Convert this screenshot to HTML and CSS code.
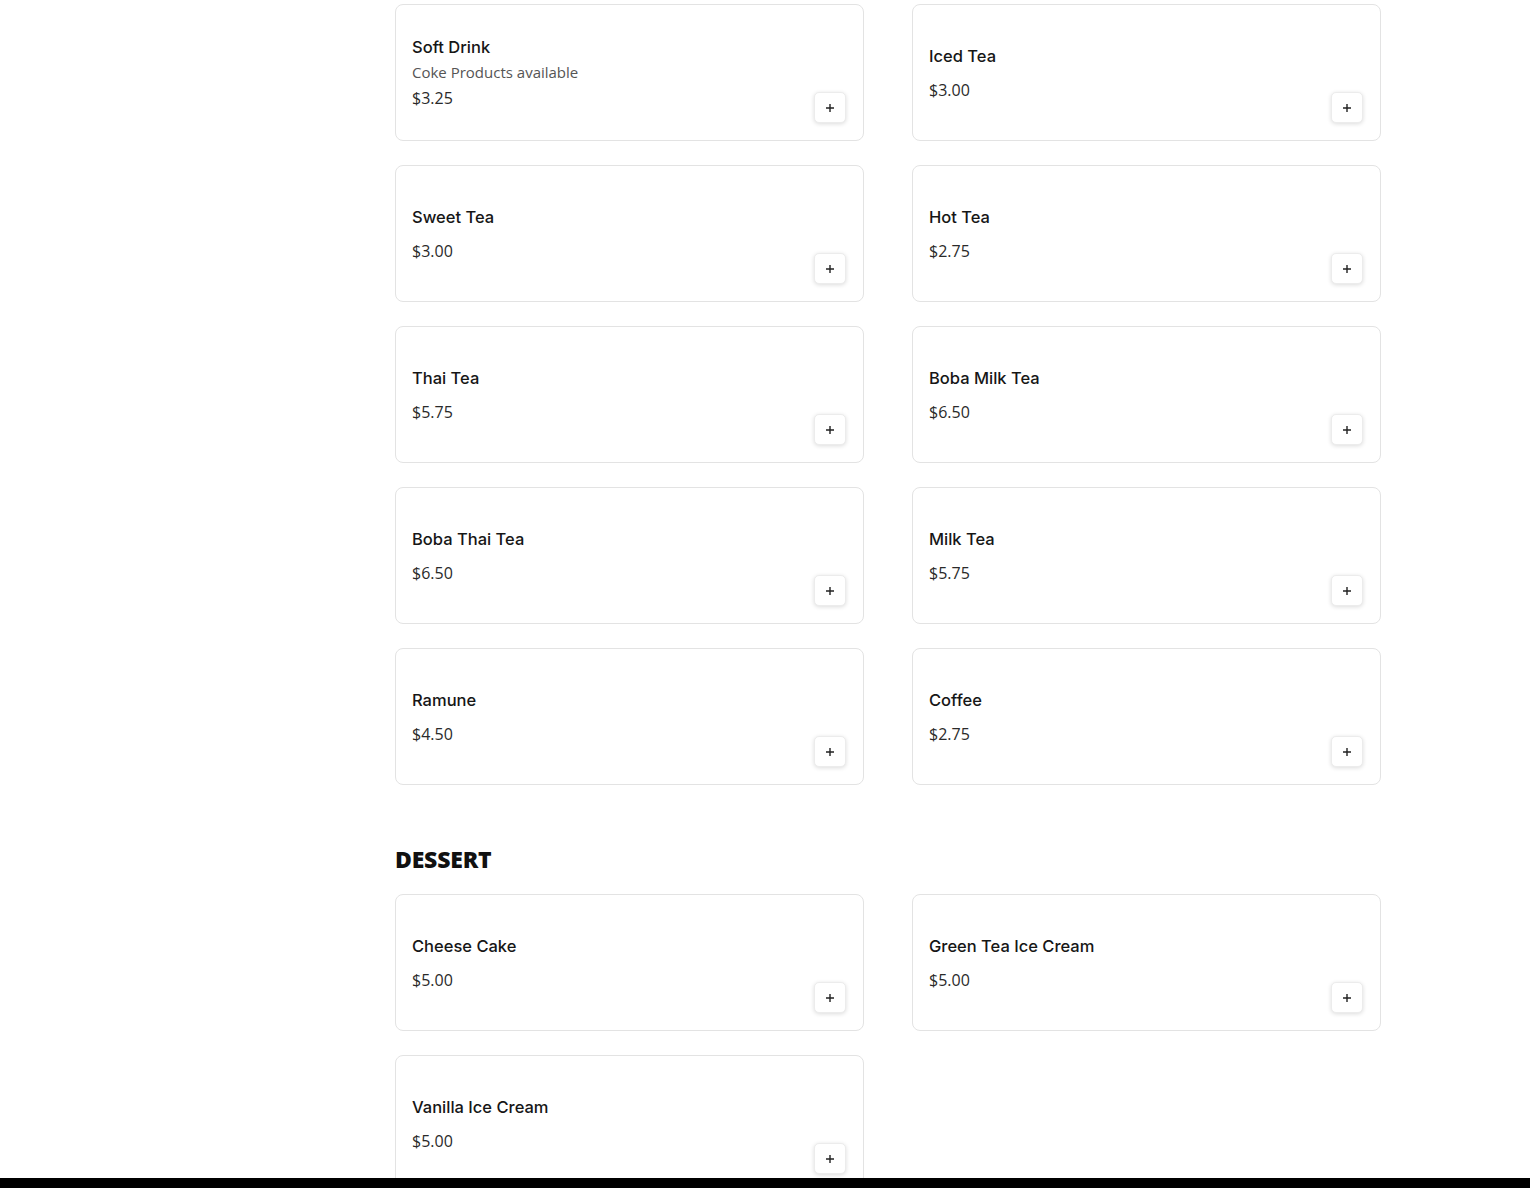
FILE: index.html
```html
<!DOCTYPE html>
<html>
<head>
<meta charset="utf-8">
<link rel="stylesheet" href="styles.css">
</head>
<body>
<div class="page">
  <aside class="side"></aside>
  <main class="menu">
    <section class="section">
      <div class="grid">
        <div class="card"><div class="info"><div class="title">Soft Drink</div><div class="desc">Coke Products available</div><div class="price">$3.25</div></div><button class="add"><svg viewBox="0 0 10 10" width="10" height="10"><path d="M5 1v8M1 5h8" stroke="#222" stroke-width="1.4"/></svg></button></div>
        <div class="card"><div class="info"><div class="title">Iced Tea</div><div class="price">$3.00</div></div><button class="add"><svg viewBox="0 0 10 10" width="10" height="10"><path d="M5 1v8M1 5h8" stroke="#222" stroke-width="1.4"/></svg></button></div>
        <div class="card"><div class="info"><div class="title">Sweet Tea</div><div class="price">$3.00</div></div><button class="add"><svg viewBox="0 0 10 10" width="10" height="10"><path d="M5 1v8M1 5h8" stroke="#222" stroke-width="1.4"/></svg></button></div>
        <div class="card"><div class="info"><div class="title">Hot Tea</div><div class="price">$2.75</div></div><button class="add"><svg viewBox="0 0 10 10" width="10" height="10"><path d="M5 1v8M1 5h8" stroke="#222" stroke-width="1.4"/></svg></button></div>
        <div class="card"><div class="info"><div class="title">Thai Tea</div><div class="price">$5.75</div></div><button class="add"><svg viewBox="0 0 10 10" width="10" height="10"><path d="M5 1v8M1 5h8" stroke="#222" stroke-width="1.4"/></svg></button></div>
        <div class="card"><div class="info"><div class="title">Boba Milk Tea</div><div class="price">$6.50</div></div><button class="add"><svg viewBox="0 0 10 10" width="10" height="10"><path d="M5 1v8M1 5h8" stroke="#222" stroke-width="1.4"/></svg></button></div>
        <div class="card"><div class="info"><div class="title">Boba Thai Tea</div><div class="price">$6.50</div></div><button class="add"><svg viewBox="0 0 10 10" width="10" height="10"><path d="M5 1v8M1 5h8" stroke="#222" stroke-width="1.4"/></svg></button></div>
        <div class="card"><div class="info"><div class="title">Milk Tea</div><div class="price">$5.75</div></div><button class="add"><svg viewBox="0 0 10 10" width="10" height="10"><path d="M5 1v8M1 5h8" stroke="#222" stroke-width="1.4"/></svg></button></div>
        <div class="card"><div class="info"><div class="title">Ramune</div><div class="price">$4.50</div></div><button class="add"><svg viewBox="0 0 10 10" width="10" height="10"><path d="M5 1v8M1 5h8" stroke="#222" stroke-width="1.4"/></svg></button></div>
        <div class="card"><div class="info"><div class="title">Coffee</div><div class="price">$2.75</div></div><button class="add"><svg viewBox="0 0 10 10" width="10" height="10"><path d="M5 1v8M1 5h8" stroke="#222" stroke-width="1.4"/></svg></button></div>
      </div>
    </section>
    <section class="section">
      <h2 class="heading">DESSERT</h2>
      <div class="grid">
        <div class="card"><div class="info"><div class="title">Cheese Cake</div><div class="price">$5.00</div></div><button class="add"><svg viewBox="0 0 10 10" width="10" height="10"><path d="M5 1v8M1 5h8" stroke="#222" stroke-width="1.4"/></svg></button></div>
        <div class="card"><div class="info"><div class="title">Green Tea Ice Cream</div><div class="price">$5.00</div></div><button class="add"><svg viewBox="0 0 10 10" width="10" height="10"><path d="M5 1v8M1 5h8" stroke="#222" stroke-width="1.4"/></svg></button></div>
        <div class="card"><div class="info"><div class="title">Vanilla Ice Cream</div><div class="price">$5.00</div></div><button class="add"><svg viewBox="0 0 10 10" width="10" height="10"><path d="M5 1v8M1 5h8" stroke="#222" stroke-width="1.4"/></svg></button></div>
      </div>
    </section>
  </main>
</div>
<div class="bottom-bar"></div>
</body>
</html>
```

FILE: styles.css
```css
* { box-sizing: border-box; }
html, body { margin: 0; padding: 0; background: #fff; }
body {
  font-family: "Open Sans", "Noto Sans", sans-serif;
  color: #1a1a1a;
  overflow: hidden;
  height: 1188px;
}
.page { display: flex; }
.side { width: 395px; flex: none; }
.menu { width: 986px; flex: none; padding-top: 4px; }
.grid {
  display: grid;
  grid-template-columns: 1fr 1fr;
  column-gap: 48px;
  row-gap: 24px;
}
.card {
  height: 137px;
  border: 1px solid #e3e3e3;
  border-radius: 8px;
  padding: 0 17px 17px 16px;
  display: flex;
  align-items: center;
  background: #fff;
}
.info { flex: 1; padding-top: 17px; }
.title {
  font-family: "Inter", "Open Sans", sans-serif;
  font-size: 16.5px;
  font-weight: 500;
  line-height: 24px;
  color: #161616;
}
.desc {
  font-size: 15px;
  line-height: 22px;
  color: #555;
  margin-top: 2px;
}
.price {
  font-size: 16px;
  line-height: 24px;
  color: #2a2a2a;
}
.title + .price { margin-top: 10px; }
.desc + .price { margin-top: 3px; }
.add {
  align-self: flex-end;
  width: 32px;
  height: 31px;
  border: 1px solid #ececec;
  border-radius: 5px;
  background: #fff;
  box-shadow: 0 1px 4px rgba(0,0,0,0.14);
  display: flex;
  align-items: center;
  justify-content: center;
  padding: 0;
}
.add svg { display: block; }
.heading {
  margin: 59px 0 20px;
  font-size: 23px;
  line-height: 30px;
  font-weight: 800;
  color: #111;
  letter-spacing: -0.2px;
}
.bottom-bar {
  position: fixed;
  left: 0;
  right: 0;
  bottom: 0;
  height: 10px;
  background: #000;
}
```
